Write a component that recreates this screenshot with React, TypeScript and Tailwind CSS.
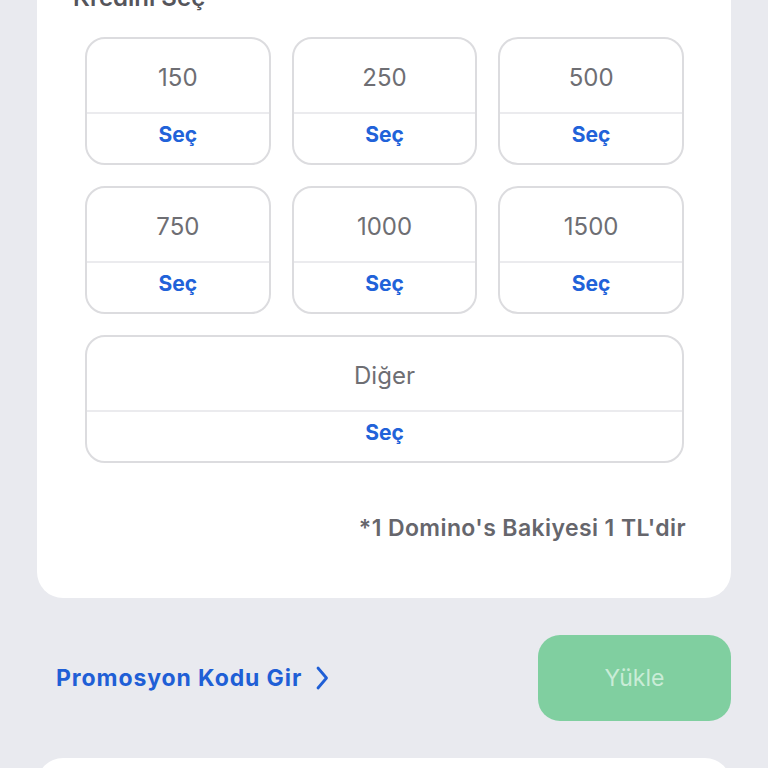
import React from "react";

const amounts = ["150", "250", "500", "750", "1000", "1500"];

const OptionBox: React.FC<{ label: string; wide?: boolean }> = ({ label, wide }) => (
  <div
    className={`flex flex-col rounded-[20px] border-2 border-[#dcdcdf] bg-white ${
      wide ? "col-span-3" : ""
    }`}
  >
    <div className="flex h-[75px] items-center justify-center border-b-2 border-[#ebebee] pt-[5px] text-[24px] text-[#6e6e73]">
      {label}
    </div>
    <div className="flex h-[49px] items-center justify-center pb-[7px] text-[21px] font-bold text-[#2162d9]">
      Seç
    </div>
  </div>
);

export default function App() {
  return (
    <div
      className="h-[768px] w-[768px] overflow-hidden bg-[#e9eaef]"
      style={{ fontFamily: "Inter, 'Noto Sans', sans-serif" }}
    >
      <div className="mx-[37px] -mt-[46px] rounded-[26px] bg-white pb-[55px] pt-[28px]">
        <div className="px-[36px] text-[24px] font-semibold leading-[32px] text-[#55555b]">
          Kredini Seç
        </div>
        <div className="mt-[23px] grid grid-cols-3 gap-x-[21px] gap-y-[21px] pl-[48px] pr-[47px]">
          {amounts.map((a) => (
            <OptionBox key={a} label={a} />
          ))}
          <OptionBox label="Diğer" wide />
        </div>
        <div className="mt-[50px] pr-[45px] text-right text-[23px] font-semibold leading-[30px] tracking-[0.4px] text-[#66666c]">
          *1 Domino's Bakiyesi 1 TL'dir
        </div>
      </div>
      <div className="mt-[37px] flex items-center justify-between pl-[56px] pr-[37px]">
        <div className="flex items-center gap-[12px] text-[23px] font-bold tracking-[0.9px] text-[#1f5fd6]">
          <span>Promosyon Kodu Gir</span>
          <svg width="16" height="26" viewBox="0 0 16 26" fill="none">
            <path d="M4 3l8.5 10L4 23" stroke="#1f5fd6" strokeWidth="2.8" strokeLinecap="round" strokeLinejoin="round" />
          </svg>
        </div>
        <div className="flex h-[86px] w-[193px] items-center justify-center rounded-[22px] bg-[#80cfa0] text-[23px] text-[#c9ecd7]">
          Yükle
        </div>
      </div>
      <div className="mx-[37px] mt-[37px] h-[120px] rounded-[26px] bg-white" />
    </div>
  );
}
